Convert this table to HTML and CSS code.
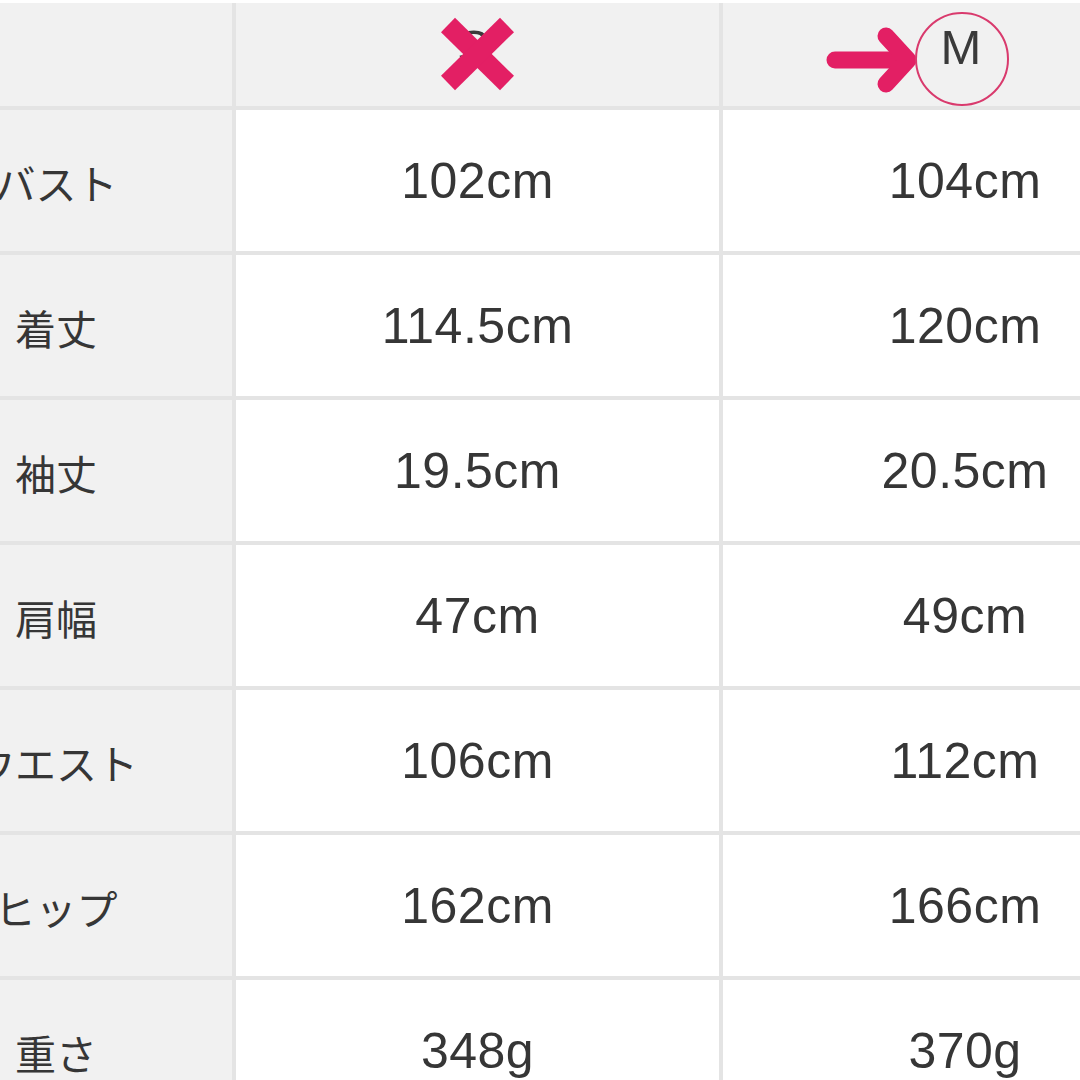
FILE: index.html
```html
<!DOCTYPE html>
<html lang="ja">
<head>
<meta charset="utf-8">
<title>サイズ表</title>
<link rel="stylesheet" href="styles.css">
</head>
<body>
<div class="sheet">
  <div class="cell head corner"></div>
  <div class="cell head size">
    <span class="size-label">S</span>
    <svg class="mark" width="484" height="103" viewBox="0 0 484 103" aria-hidden="true">
      <line x1="212" y1="22" x2="271" y2="80" stroke="#e31f64" stroke-width="20"/>
      <line x1="212" y1="80" x2="271" y2="22" stroke="#e31f64" stroke-width="20"/>
    </svg>
  </div>
  <div class="cell head size">
    <span class="size-label">M</span>
    <svg class="mark" width="484" height="103" viewBox="0 0 484 103" aria-hidden="true">
      <line x1="112" y1="57" x2="178" y2="57" stroke="#e31f64" stroke-width="17" stroke-linecap="round"/>
      <polyline points="163,33 185,57 163,81" fill="none" stroke="#e31f64" stroke-width="17" stroke-linecap="round" stroke-linejoin="round"/>
      <circle cx="239" cy="56" r="46" fill="none" stroke="#d93a6d" stroke-width="2"/>
    </svg>
  </div>

  <div class="cell label">バスト</div>
  <div class="cell value">102cm</div>
  <div class="cell value">104cm</div>

  <div class="cell label">着丈</div>
  <div class="cell value">114.5cm</div>
  <div class="cell value">120cm</div>

  <div class="cell label">袖丈</div>
  <div class="cell value">19.5cm</div>
  <div class="cell value">20.5cm</div>

  <div class="cell label">肩幅</div>
  <div class="cell value">47cm</div>
  <div class="cell value">49cm</div>

  <div class="cell label">ウエスト</div>
  <div class="cell value">106cm</div>
  <div class="cell value">112cm</div>

  <div class="cell label">ヒップ</div>
  <div class="cell value">162cm</div>
  <div class="cell value">166cm</div>

  <div class="cell label">重さ</div>
  <div class="cell value">348g</div>
  <div class="cell value">370g</div>
</div>
</body>
</html>
```

FILE: styles.css
```css
html, body {
  margin: 0;
  padding: 0;
  background: #ffffff;
  overflow: hidden;
  width: 1080px;
  height: 1080px;
}

.sheet {
  display: grid;
  grid-template-columns: 352px 483px 484px;
  grid-template-rows: 103px repeat(7, 141px);
  gap: 4px;
  background: #e4e4e4;
  margin-top: 3px;
  margin-left: -120px;
  width: max-content;
}

.cell {
  display: flex;
  align-items: center;
  justify-content: center;
  color: #363636;
}

.head {
  background: #f1f1f1;
  position: relative;
}

.size-label {
  font-family: "Liberation Sans", Arial, sans-serif;
  font-size: 49px;
  line-height: 1;
  padding-bottom: 14px;
  position: relative;
  left: -4px;
  color: #3a3a3a;
}

.mark {
  position: absolute;
  left: 0;
  top: 0;
}

.label {
  background: #f1f1f1;
  font-family: "Noto Sans CJK JP", "Noto Sans", sans-serif;
  font-size: 41px;
  line-height: 1;
  padding-top: 4px;
}

.value {
  background: #ffffff;
  font-family: "Liberation Sans", Arial, sans-serif;
  font-size: 50px;
  line-height: 1;
  letter-spacing: 0.5px;
}
```
